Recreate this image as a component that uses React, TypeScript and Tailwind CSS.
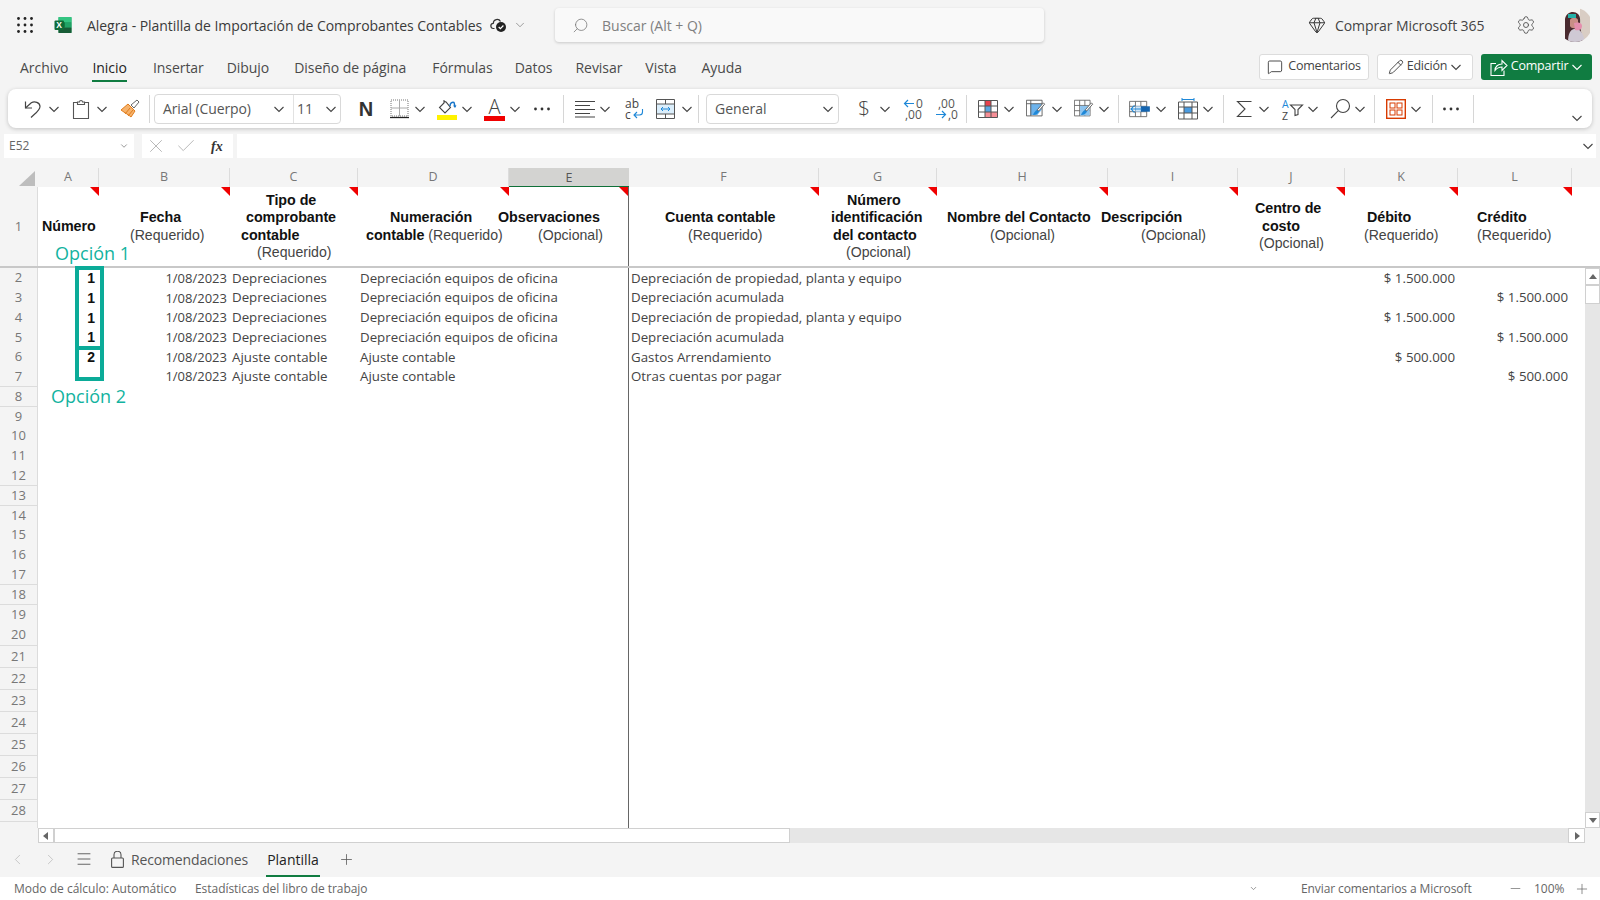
import React from 'react';
import { ChevronDown, ChevronLeft, ChevronRight, MessageSquare, Pencil, Search, Settings, Plus, Minus, Menu, X, Check, Gem } from 'lucide-react';

const gridCols = 'grid grid-cols-[38px_61px_131px_128px_151px_120px_190px_118px_171px_130px_107px_113px_114px_1fr]';

const letters = ['A', 'B', 'C', 'D', 'E', 'F', 'G', 'H', 'I', 'J', 'K', 'L'];

const menuTabs = [
  { label: 'Archivo', cls: 'ml-[20px]' },
  { label: 'Inicio', cls: 'ml-[24px]', active: true },
  { label: 'Insertar', cls: 'ml-[26px]' },
  { label: 'Dibujo', cls: 'ml-[23px]' },
  { label: 'Diseño de página', cls: 'ml-[25px]' },
  { label: 'Fórmulas', cls: 'ml-[26px]' },
  { label: 'Datos', cls: 'ml-[22px]' },
  { label: 'Revisar', cls: 'ml-[23px]' },
  { label: 'Vista', cls: 'ml-[23px]' },
  { label: 'Ayuda', cls: 'ml-[25px]' },
];

type Line = { b?: string; t?: string; cls: string };

const headerCells: Line[][] = [
  [{ b: 'Número', cls: 'pl-[4px]' }],
  [{ b: 'Fecha', cls: 'pl-[41px]' }, { t: '(Requerido)', cls: 'pl-[31px]' }],
  [{ b: 'Tipo de', cls: 'pl-[36px]' }, { b: 'comprobante', cls: 'pl-[16px]' }, { b: 'contable', cls: 'pl-[11px]' }, { t: '(Requerido)', cls: 'pl-[27px]' }],
  [{ b: 'Numeración', cls: 'pl-[32px]' }, { b: 'contable', t: ' (Requerido)', cls: 'pl-[8px]' }],
  [{ b: 'Observaciones', cls: '-ml-[11px]' }, { t: '(Opcional)', cls: 'pl-[29px]' }],
  [{ b: 'Cuenta contable', cls: 'pl-[36px]' }, { t: '(Requerido)', cls: 'pl-[59px]' }],
  [{ b: 'Número', cls: 'pl-[28px]' }, { b: 'identificación', cls: 'pl-[12px]' }, { b: 'del contacto', cls: 'pl-[14px]' }, { t: '(Opcional)', cls: 'pl-[27px]' }],
  [{ b: 'Nombre del Contacto', cls: 'pl-[10px]' }, { t: '(Opcional)', cls: 'pl-[53px]' }],
  [{ b: 'Descripción', cls: '-ml-[7px]' }, { t: '(Opcional)', cls: 'pl-[33px]' }],
  [{ b: 'Centro de', cls: 'pl-[17px]' }, { b: 'costo', cls: 'pl-[24px]' }, { t: '(Opcional)', cls: 'pl-[21px]' }],
  [{ b: 'Débito', cls: 'pl-[22px]' }, { t: '(Requerido)', cls: 'pl-[19px]' }],
  [{ b: 'Crédito', cls: 'pl-[19px]' }, { t: '(Requerido)', cls: 'pl-[19px]' }],
];

const dep = 'Depreciación equipos de oficina';
const prop = 'Depreciación de propiedad, planta y equipo';
const rows = [
  { n: '1', tipo: 'Depreciaciones', num: dep, cuenta: prop, deb: '$ 1.500.000', cre: '' },
  { n: '1', tipo: 'Depreciaciones', num: dep, cuenta: 'Depreciación acumulada', deb: '', cre: '$ 1.500.000' },
  { n: '1', tipo: 'Depreciaciones', num: dep, cuenta: prop, deb: '$ 1.500.000', cre: '' },
  { n: '1', tipo: 'Depreciaciones', num: dep, cuenta: 'Depreciación acumulada', deb: '', cre: '$ 1.500.000' },
  { n: '2', tipo: 'Ajuste contable', num: 'Ajuste contable', cuenta: 'Gastos Arrendamiento', deb: '$ 500.000', cre: '' },
  { n: '', tipo: 'Ajuste contable', num: 'Ajuste contable', cuenta: 'Otras cuentas por pagar', deb: '', cre: '$ 500.000' },
];

const Chev = ({ className = '' }: { className?: string }) => (
  <svg width="12" height="12" viewBox="0 0 12 12" fill="none" stroke="#444" strokeWidth="1.1" className={`shrink-0 ${className}`}>
    <path d="M1.5 4L6 8.5 10.5 4" />
  </svg>
);

const Sep = ({ className = '' }: { className?: string }) => (
  <div className={`w-px h-[28px] bg-[#d6d6d6] shrink-0 ${className}`} />
);

const Dots = ({ className = '' }: { className?: string }) => (
  <svg width="18" height="6" viewBox="0 0 18 6" className={`shrink-0 ${className}`} fill="#333">
    <circle cx="2.5" cy="3" r="1.4" /><circle cx="9" cy="3" r="1.4" /><circle cx="15.5" cy="3" r="1.4" />
  </svg>
);

const Waffle = () => (
  <svg width="16" height="16" viewBox="0 0 16 16" fill="#222" className="shrink-0">
    {[1.5, 8, 14.5].flatMap(y => [1.5, 8, 14.5].map(x => <circle key={`${x}-${y}`} cx={x} cy={y} r="1.4" />))}
  </svg>
);

const ExcelLogo = () => (
  <svg width="18" height="18" viewBox="0 0 18 18" className="shrink-0">
    <rect x="4.5" y="1" width="13" height="16" rx="1" fill="#21a366" />
    <rect x="4.5" y="1" width="13" height="5.3" fill="#33c481" />
    <rect x="4.5" y="6.3" width="6.5" height="5.3" fill="#107c41" />
    <rect x="11" y="6.3" width="6.5" height="5.3" fill="#21a366" />
    <rect x="4.5" y="11.6" width="13" height="5.4" fill="#185c37" />
    <rect x="0.5" y="4.5" width="9.5" height="9.5" rx="1" fill="#0e6b38" />
    <text x="5.2" y="12" fontSize="8.5" fontWeight="700" fill="#fff" textAnchor="middle" fontFamily="Liberation Sans">X</text>
  </svg>
);

const CloudCheck = () => (
  <svg width="18" height="16" viewBox="0 0 18 16" className="shrink-0">
    <path d="M4.5 11.5H3.6a2.6 2.6 0 0 1-.3-5.2A3.8 3.8 0 0 1 10.5 4.6" fill="none" stroke="#333" strokeWidth="1.2" />
    <circle cx="11" cy="10" r="5" fill="#222" />
    <path d="M8.7 10l1.7 1.7 3-3.2" fill="none" stroke="#fff" strokeWidth="1.2" />
  </svg>
);

const Avatar = () => (
  <svg width="34" height="34" viewBox="0 0 34 34" className="shrink-0">
    <defs><clipPath id="av"><circle cx="17" cy="17" r="17" /></clipPath></defs>
    <g clipPath="url(#av)">
      <rect width="34" height="34" fill="#f6f4f2" />
      <rect x="22" y="0" width="10" height="34" fill="#d9cdc4" />
      <path d="M7 34V11c1-7 9-9 13-5 3 3 2 8 2 12l3 16z" fill="#4a2a2e" />
      <path d="M12 12c1-3 7-3 8 0v6c-1 3-7 3-8 0z" fill="#c98f86" />
      <path d="M10 6h8v4h-8z" fill="#25b0a8" />
      <path d="M10 34c0-8 2-12 6-13 4-1 9 2 11 13z" fill="#cfc9d4" />
      <path d="M16 15c3-1 8-1 8 3s-4 5-7 4z" fill="#e58fae" />
    </g>
  </svg>
);

const Undo = () => (
  <svg width="20" height="20" viewBox="0 0 20 20" fill="none" stroke="#444" strokeWidth="1.2" className="shrink-0">
    <path d="M2.5 2.5V9H9" />
    <path d="M2.5 9l5.8-5.2c3.2-2 8.7-.4 8.7 3.7 0 4-5 7-9 11" />
  </svg>
);

const Paste = ({ className = '' }: { className?: string }) => (
  <svg width="18" height="20" viewBox="0 0 18 20" fill="none" stroke="#555" strokeWidth="1.1" className={`shrink-0 ${className}`}>
    <path d="M5.5 3.5h-4v16h15v-16h-4" />
    <path d="M5.5 5.5V3h2a1.5 1.5 0 0 1 3 0h2v2.5z" />
  </svg>
);

const Painter = ({ className = '' }: { className?: string }) => (
  <svg width="20" height="20" viewBox="0 0 20 20" className={`shrink-0 ${className}`}>
    <path d="M1 11l7-6 7 7-4 6c-2-2-6-4-10-7z" fill="#f6b26b" stroke="#e07b1a" strokeWidth="1" />
    <path d="M5 15l5-6M8 17l5-6" stroke="#e07b1a" strokeWidth="1" />
    <path d="M11 6l6-5 2 2-5 6z" fill="#fff" stroke="#666" strokeWidth="1" />
  </svg>
);

const Borders = ({ className = '' }: { className?: string }) => (
  <svg width="19" height="20" viewBox="0 0 19 20" fill="none" className={`shrink-0 ${className}`}>
    <path d="M1 1h17v16H1z" stroke="#777" strokeWidth="1" strokeDasharray="1 1" />
    <path d="M9.5 1v16M1 9h17" stroke="#aaa" strokeWidth="1" />
    <path d="M0 18.5h19" stroke="#222" strokeWidth="1.3" />
  </svg>
);

const Fill = ({ className = '' }: { className?: string }) => (
  <svg width="21" height="22" viewBox="0 0 21 22" fill="none" className={`shrink-0 ${className}`}>
    <path d="M7 2v3L2.5 9.5 8 15l5.5-5.5L9 4a1.5 1.5 0 0 0-2 0" stroke="#444" strokeWidth="1.1" />
    <path d="M13 8c0-3 2-4 4-3.5l1 4" stroke="#1976c9" strokeWidth="1.5" />
    <path d="M16 7.5l2 2.5 1.5-2.5z" fill="#1976c9" />
    <rect x="0" y="17" width="20" height="5" fill="#fff200" />
  </svg>
);

const FontColor = ({ className = '' }: { className?: string }) => (
  <div className={`w-[21px] h-[24px] shrink-0 flex flex-col items-center ${className}`}>
    <span className="font-['Open_Sans'] text-[20px] leading-[19px] text-[#444] font-light">A</span>
    <span className="mt-auto w-full h-[5px] bg-[#f00000]" />
  </div>
);

const Align = ({ className = '' }: { className?: string }) => (
  <svg width="20" height="18" viewBox="0 0 20 18" stroke="#444" strokeWidth="1.1" className={`shrink-0 ${className}`}>
    <path d="M0 1.5h20M0 5.5h15M0 9.5h20M0 13.5h15M0 17h20" />
  </svg>
);

const Wrap = ({ className = '' }: { className?: string }) => (
  <svg width="20" height="22" viewBox="0 0 20 22" fill="none" className={`shrink-0 overflow-visible ${className}`}>
    <text x="0" y="10" fontSize="12" fill="#444" fontFamily="Open Sans">ab</text>
    <text x="0" y="21" fontSize="12" fill="#444" fontFamily="Open Sans">c</text>
    <path d="M17.5 11v3a3 3 0 0 1-3 3h-5M12 14l-3 3 3 3" stroke="#1e88d8" strokeWidth="1.1" />
  </svg>
);

const Merge = ({ className = '' }: { className?: string }) => (
  <svg width="19" height="20" viewBox="0 0 19 20" fill="none" className={`shrink-0 ${className}`}>
    <rect x="1" y="5" width="17" height="10" fill="#dbeefb" />
    <path d="M.5.5h18v19H.5zM.5 5h18M.5 15h18M9.5.5V5M9.5 15v4.5" stroke="#555" strokeWidth="1" />
    <path d="M5 10h9M7 8l-2 2 2 2M12 8l2 2-2 2" stroke="#1e88d8" strokeWidth="1" />
  </svg>
);

const Dec = ({ left, className = '' }: { left?: boolean; className?: string }) => (
  <svg width="22" height="22" viewBox="0 0 22 22" fill="none" className={`shrink-0 overflow-visible ${className}`}>
    {left ? (
      <>
        <path d="M12 5.5H2.5M6 2L2.5 5.5 6 9" stroke="#1e88d8" strokeWidth="1.2" />
        <text x="14" y="10" fontSize="12" fill="#555" fontFamily="Open Sans">0</text>
        <text x="3" y="21" fontSize="12" fill="#555" fontFamily="Open Sans">,00</text>
      </>
    ) : (
      <>
        <text x="3" y="10" fontSize="12" fill="#555" fontFamily="Open Sans">,00</text>
        <path d="M1 16.5h9.5M7 13l3.5 3.5L7 20" stroke="#1e88d8" strokeWidth="1.2" />
        <text x="13" y="21" fontSize="12" fill="#555" fontFamily="Open Sans">,0</text>
      </>
    )}
  </svg>
);

const CondFormat = ({ className = '' }: { className?: string }) => (
  <svg width="20" height="20" viewBox="0 0 20 20" fill="none" className={`shrink-0 ${className}`}>
    <rect x="7" y="1.5" width="6" height="5.5" fill="#e8414d" />
    <rect x="7" y="7" width="6" height="6" fill="#5aa5e0" />
    <rect x="7" y="13" width="12" height="5.5" fill="#f58e96" />
    <path d="M.5 1.5h19v17H.5zM.5 7h19M.5 13h19M7 1.5v17M13 1.5v17" stroke="#555" strokeWidth="1" />
  </svg>
);

const Brush = () => (
  <>
    <path d="M8 18c1-3 3-5 5-6l2 2c-1 2-3 4-7 4z" fill="#1e88d8" />
    <path d="M13 12l7-8 1.5 1.5-7 8z" fill="#fff" stroke="#555" strokeWidth="1" />
  </>
);

const TableFmt = ({ className = '' }: { className?: string }) => (
  <svg width="20" height="19" viewBox="0 0 23 21" fill="none" className={`shrink-0 ${className}`}>
    <path d="M5 5h13v7l-5 6H5z" fill="#6db3ec" />
    <path d="M.5 1h18v18H.5zM.5 5h18M5.5 1v18" stroke="#555" strokeWidth="1" />
    <Brush />
  </svg>
);

const CellStyles = ({ className = '' }: { className?: string }) => (
  <svg width="20" height="19" viewBox="0 0 23 21" fill="none" className={`shrink-0 ${className}`}>
    <path d="M.5 1h18v18H.5zM.5 7h18M.5 13h18M6.5 1v18M12.5 1v18" stroke="#666" strokeWidth="1" />
    <rect x="7" y="7.5" width="11" height="11" fill="#8cc4f0" />
    <Brush />
  </svg>
);

const InsertCells = ({ className = '' }: { className?: string }) => (
  <svg width="21" height="18" viewBox="0 0 23 20" fill="none" className={`shrink-0 ${className}`}>
    <path d="M.5 1.5h19v17H.5zM.5 7h19M.5 13h19M7 1.5v17M13 1.5v17" stroke="#666" strokeWidth="1" />
    <rect x="7" y="7" width="16" height="6" fill="#1565b0" />
    <rect x="7" y="7" width="6" height="6" fill="#cfe5f7" />
    <path d="M14 10H2M6 6l-4 4 4 4" stroke="#1e88d8" strokeWidth="1.2" />
  </svg>
);

const FormatCells = ({ className = '' }: { className?: string }) => (
  <svg width="20" height="22" viewBox="0 0 20 22" fill="none" className={`shrink-0 ${className}`}>
    <rect x="6" y="9" width="8" height="6" fill="#4a9be0" />
    <path d="M.5 4h19v17H.5zM.5 9h19M.5 15h19M6 4v17M14 4v17" stroke="#555" strokeWidth="1" />
    <path d="M4 1.5h12M4 0v3M16 0v3" stroke="#1e88d8" strokeWidth="1" />
  </svg>
);

const SigmaIcon = ({ className = '' }: { className?: string }) => (
  <svg width="16" height="18" viewBox="0 0 16 18" fill="none" stroke="#444" strokeWidth="1.1" className={`shrink-0 ${className}`}>
    <path d="M15.5 1.5H1.5L9 9l-7.5 7.5h14" />
  </svg>
);

const SortFilter = ({ className = '' }: { className?: string }) => (
  <svg width="21" height="24" viewBox="0 0 21 24" fill="none" className={`shrink-0 overflow-visible ${className}`}>
    <text x="0" y="11" fontSize="10.5" fill="#1e88d8" fontFamily="Open Sans">A</text>
    <text x="0" y="23" fontSize="10.5" fill="#444" fontFamily="Open Sans">Z</text>
    <path d="M8.5 8h12l-4.5 4.5v5l-3 1v-6z" stroke="#444" strokeWidth="1.1" />
  </svg>
);

const Find = ({ className = '' }: { className?: string }) => (
  <svg width="21" height="21" viewBox="0 0 21 21" fill="none" stroke="#444" strokeWidth="1.1" className={`shrink-0 ${className}`}>
    <circle cx="13" cy="8" r="6.5" />
    <path d="M8.3 12.7L1 20" />
  </svg>
);

const AddIns = ({ className = '' }: { className?: string }) => (
  <svg width="20" height="20" viewBox="0 0 20 20" fill="none" stroke="#d83b01" className={`shrink-0 ${className}`}>
    <rect x=".7" y=".7" width="18.6" height="18.6" strokeWidth="1.4" />
    <rect x="4" y="4" width="5" height="5" strokeWidth="1" />
    <rect x="11" y="4" width="5" height="5" strokeWidth="1" />
    <rect x="4" y="11" width="5" height="5" strokeWidth="1" />
    <rect x="11" y="11" width="5" height="5" strokeWidth="1" />
  </svg>
);

const ShareIcon = () => (
  <svg width="18" height="18" viewBox="0 0 18 18" fill="none" stroke="#fff" strokeWidth="1.1" className="shrink-0">
    <path d="M6 5.5H1v12h13v-5" />
    <path d="M5 12.5c0-4 3-6.5 7-6.5V2.5l5 5-5 5V9c-3 0-5 1-7 3.5z" />
  </svg>
);

const LockIcon = ({ className = '' }: { className?: string }) => (
  <svg width="13" height="17" viewBox="0 0 13 17" fill="none" stroke="#555" strokeWidth="1.1" className={`shrink-0 ${className}`}>
    <rect x=".6" y="7" width="11.8" height="9.4" rx="1" />
    <path d="M3 7V3.8a3.5 3.5 0 0 1 7 0V7" />
  </svg>
);

const Triangle = () => (
  <svg width="9" height="9" viewBox="0 0 9 9" className="absolute top-0 right-0" fill="#f00000">
    <path d="M0 0h9v9z" />
  </svg>
);

const ScrollBtn = ({ dir, className = '' }: { dir: 'up' | 'down' | 'left' | 'right'; className?: string }) => {
  const d = { up: 'M0 6l4-5 4 5z', down: 'M0 2l4 5 4-5z', left: 'M6 0L1 4l5 4z', right: 'M2 0l5 4-5 4z' }[dir];
  return (
    <div className={`bg-white border border-[#d0d0d0] flex items-center justify-center shrink-0 ${className}`}>
      <svg width="8" height="8" viewBox="0 0 8 8" fill="#666"><path d={d} /></svg>
    </div>
  );
};

export default function App() {
  const rowNums = Array.from({ length: 28 }, (_, i) => i + 2);

  return (
    <div className="w-[1600px] h-[900px] overflow-hidden bg-[#f4f4f4] flex flex-col font-['Open_Sans',sans-serif] text-[#333]">
      {/* title bar */}
      <div className="h-[50px] shrink-0 flex items-center">
        <div className="ml-[17px]"><Waffle /></div>
        <div className="ml-[21px]"><ExcelLogo /></div>
        <span className="ml-[15px] text-[14px] tracking-[-0.05px] text-[#3a3a3a] whitespace-nowrap w-[398px]">Alegra - Plantilla de Importación de Comprobantes Contables</span>
        <div className="ml-[5px]"><CloudCheck /></div>
        <ChevronDown size={14} strokeWidth={1.2} className="ml-[5px] text-[#777]" />
        <div className="ml-[28px] w-[489px] h-[34px] rounded-[4px] bg-[#f9f9f9] shadow-[0_1px_3px_rgba(0,0,0,0.18)] flex items-center">
          <Search size={17} strokeWidth={1.1} className="ml-[17px] text-[#777] -scale-x-100" />
          <span className="ml-[13px] text-[14px] text-[#808080]">Buscar (Alt + Q)</span>
        </div>
        <Gem size={18} strokeWidth={1.3} className="ml-[264px] text-[#333]" />
        <span className="ml-[9px] text-[14px] tracking-[-0.08px] text-[#444] whitespace-nowrap w-[149px]">Comprar Microsoft 365</span>
        <Settings size={20} strokeWidth={1.1} className="ml-[32px] text-[#555]" />
        <div className="ml-[22px]"><Avatar /></div>
      </div>

      {/* menu tabs */}
      <div className="h-[36px] shrink-0 flex items-center">
        {menuTabs.map(tab => (
          <div key={tab.label} className={`h-full flex items-center relative pb-[2px] text-[14px] tracking-[-0.05px] whitespace-nowrap ${tab.cls} ${tab.active ? 'text-[#222] font-medium' : 'text-[#4a4a4a]'}`}>
            {tab.label}
            {tab.active && <span className="absolute left-0 right-0 bottom-[4px] h-[2px] bg-[#107c41]" />}
          </div>
        ))}
        <div className="ml-auto mr-[8px] mb-[3px] flex items-center gap-[8px]">
          <div className="h-[26px] w-[110px] rounded-[3px] bg-white border border-[#dcdcdc] flex items-center justify-center gap-[5px] text-[12.5px] tracking-[-0.2px] text-[#444]">
            <MessageSquare size={16} strokeWidth={1.2} className="text-[#222]" />
            Comentarios
          </div>
          <div className="h-[26px] w-[96px] rounded-[3px] bg-white border border-[#dcdcdc] flex items-center justify-center gap-[3px] text-[12.5px] tracking-[-0.2px] text-[#444]">
            <Pencil size={16} strokeWidth={1.2} className="text-[#222]" />
            Edición
            <Chev />
          </div>
          <div className="h-[26px] w-[111px] rounded-[3px] bg-[#107c41] flex items-center justify-center gap-[3px] text-[12.5px] tracking-[-0.2px] font-medium text-white">
            <ShareIcon />
            Compartir
            <svg width="12" height="12" viewBox="0 0 12 12" fill="none" stroke="#fff" strokeWidth="1.1" className="shrink-0"><path d="M1.5 4L6 8.5 10.5 4" /></svg>
          </div>
        </div>
      </div>

      {/* ribbon */}
      <div className="mx-[8px] mt-[3px] h-[39px] shrink-0 rounded-[8px] bg-white shadow-[0_1px_4px_rgba(0,0,0,0.2)] flex items-center">
        <div className="ml-[15px]"><Undo /></div>
        <Chev className="ml-[5px]" />
        <Paste className="ml-[12px]" />
        <Chev className="ml-[6px]" />
        <Painter className="ml-[12px]" />
        <Sep className="ml-[9px]" />
        <div className="ml-[4px] w-[187px] h-[30px] shrink-0 rounded-[4px] border border-[#d9d9d9] flex items-center text-[14px] text-[#555] tracking-[-0.1px]">
          <span className="ml-[8px] w-[110px] shrink-0 whitespace-nowrap">Arial (Cuerpo)</span>
          <Chev />
          <div className="ml-[8px] w-px h-full bg-[#e2e2e2] shrink-0" />
          <span className="ml-[3px] w-[22px] shrink-0">11</span>
          <Chev className="ml-[6px]" />
        </div>
        <span className="ml-[16px] w-[18px] shrink-0 text-center text-[20px] font-bold font-['Liberation_Sans'] text-[#333]">N</span>
        <Borders className="ml-[15px]" />
        <Chev className="ml-[5px]" />
        <Fill className="ml-[11px]" />
        <Chev className="ml-[3px]" />
        <FontColor className="ml-[11px]" />
        <Chev className="ml-[4px]" />
        <Dots className="ml-[12px]" />
        <Sep className="ml-[12px]" />
        <Align className="ml-[11px]" />
        <Chev className="ml-[4px]" />
        <Wrap className="ml-[14px]" />
        <Merge className="ml-[11px]" />
        <Chev className="ml-[6px]" />
        <Sep className="ml-[5px]" />
        <div className="ml-[7px] w-[133px] h-[30px] shrink-0 rounded-[4px] border border-[#d9d9d9] flex items-center justify-between pl-[8px] pr-[4px] text-[14px] text-[#555]">
          General
          <Chev />
        </div>
        <span className="ml-[18px] w-[14px] shrink-0 text-center text-[21px] font-light text-[#444] leading-none">$</span>
        <Chev className="ml-[8px]" />
        <Dec left className="ml-[11px]" />
        <Dec className="ml-[11px]" />
        <Sep className="ml-[9px]" />
        <CondFormat className="ml-[11px]" />
        <Chev className="ml-[5px]" />
        <TableFmt className="ml-[11px]" />
        <Chev className="ml-[5px]" />
        <CellStyles className="ml-[11px]" />
        <Chev className="ml-[4px]" />
        <Sep className="ml-[8px]" />
        <InsertCells className="ml-[10px]" />
        <Chev className="ml-[5px]" />
        <FormatCells className="ml-[11px]" />
        <Chev className="ml-[4px]" />
        <Sep className="ml-[9px]" />
        <SigmaIcon className="ml-[12px]" />
        <Chev className="ml-[6px]" />
        <SortFilter className="ml-[12px]" />
        <Chev className="ml-[4px]" />
        <Find className="ml-[11px]" />
        <Chev className="ml-[3px]" />
        <Sep className="ml-[8px]" />
        <AddIns className="ml-[11px]" />
        <Chev className="ml-[4px]" />
        <Sep className="ml-[10px]" />
        <Dots className="ml-[9px]" />
        <Sep className="ml-[13px]" />
        <Chev className="ml-auto mr-[9px] mt-[18px]" />
      </div>

      {/* formula bar */}
      <div className="h-[24px] mt-[6px] shrink-0 flex">
        <div className="ml-[4px] w-[130px] bg-white flex items-center justify-between pl-[5px] pr-[5px] text-[12px] text-[#666]">
          E52
          <ChevronDown size={10} strokeWidth={1.6} />
        </div>
        <div className="ml-[8px] w-[91px] bg-white flex items-center">
          <X size={22} strokeWidth={0.9} className="ml-[3px] text-[#aaa] shrink-0" />
          <Check size={22} strokeWidth={0.9} className="ml-[8px] text-[#aaa] shrink-0" />
          <span className="ml-[14px] text-[14px] italic font-semibold font-['Liberation_Serif'] text-[#333]">fx</span>
        </div>
        <div className="ml-[4px] w-[1359px] bg-white flex items-center justify-end pr-[2px]">
          <Chev />
        </div>
      </div>

      {/* sheet */}
      <div className="mt-[10px] flex-1 min-h-0 flex flex-col relative font-['Liberation_Sans']">
        <div className={`${gridCols} h-[19px] shrink-0 font-['Open_Sans'] text-[12.5px] text-[#777]`}>
          <div className="relative">
            <svg width="16" height="15" viewBox="0 0 16 15" className="absolute right-[3px] bottom-[2px]" fill="#bdbdbd"><path d="M16 0v15H0z" /></svg>
          </div>
          {letters.map(l => (
            <div key={l} className={`relative flex items-center justify-center ${l === 'E' ? 'bg-[#d3d3d1] text-[#555]' : 'border-r border-b border-[#dcdcdc]'}`}>
              {l}
              {l === 'E' && <span className="absolute left-0 right-0 bottom-0 h-[2px] bg-[#0f7038]" />}
            </div>
          ))}
          <div className="border-b border-[#dcdcdc]" />
        </div>

        {/* row 1 */}
        <div className={`${gridCols} h-[81px] shrink-0 border-b-2 border-[#c8c8c8]`}>
          <div className="bg-[#f4f4f4] flex items-center justify-center font-['Open_Sans'] text-[13px] text-[#777] border-r border-[#dcdcdc]">1</div>
          {headerCells.map((lines, i) => (
            <div key={i} className={`relative bg-white flex flex-col justify-center text-[14.1px] whitespace-nowrap ${i === 4 ? 'border-r border-[#666]' : ''}`}>
              <Triangle />
              {lines.map((ln, j) => (
                <div key={j} className={`h-[17.5px] leading-[17.5px] text-[#444] ${ln.cls}`}>
                  {ln.b && <span className="font-bold text-[#111] text-[14.3px] tracking-[-0.05px]">{ln.b}</span>}
                  {ln.t}
                </div>
              ))}
            </div>
          ))}
          <div className="bg-white" />
        </div>

        {/* data rows and vertical scrollbar */}
        <div className="flex-1 min-h-0 flex">
          <div className="flex-1 min-w-0 overflow-hidden bg-white">
            {rowNums.map(num => {
              const r = rows[num - 2];
              return (
                <div key={num} className={`${gridCols} ${num < 20 ? 'h-[19.8px]' : 'h-[22px]'} font-['Open_Sans'] text-[13.3px] text-[#444] whitespace-nowrap`}>
                  <div className="bg-[#f4f4f4] border-b border-r border-[#dcdcdc] flex items-center justify-center text-[#777] text-[13px]">{num}</div>
                  <div className="flex items-center justify-end pr-[4px] font-['Liberation_Sans'] font-bold text-[14px] text-[#111]">{r?.n}</div>
                  <div className="flex items-center justify-end pr-[3px] text-[13px]">{r && '1/08/2023'}</div>
                  <div className="flex items-center pl-[2px]">{r?.tipo}</div>
                  <div className="flex items-center pl-[2px]">{r?.num}</div>
                  <div className="border-r border-[#666]" />
                  <div className="flex items-center pl-[2px]">{r?.cuenta}</div>
                  <div /><div /><div /><div />
                  <div className="flex items-center justify-end pr-[3px]">{r?.deb}</div>
                  <div className="flex items-center justify-end pr-[4px]">{r?.cre}</div>
                  <div />
                </div>
              );
            })}
          </div>
          <div className="w-[15px] shrink-0 bg-[#e6e6e6] flex flex-col">
            <ScrollBtn dir="up" className="h-[17px]" />
            <div className="h-[19px] bg-white border border-[#d0d0d0]" />
            <ScrollBtn dir="down" className="h-[16px] mt-auto" />
          </div>
        </div>

        {/* horizontal scrollbar */}
        <div className="h-[15px] shrink-0 flex bg-[#f4f4f4]">
          <div className="ml-[38px] flex-1 flex bg-[#e6e6e6] mr-[15px]">
            <ScrollBtn dir="left" className="w-[16px]" />
            <div className="w-[736px] bg-white border border-[#d0d0d0]" />
            <ScrollBtn dir="right" className="w-[17px] ml-auto" />
          </div>
        </div>

        {/* annotations over the sheet */}
        <span className="absolute left-[55px] top-[71px] font-['Open_Sans'] text-[18px] leading-[28px] text-[#12b3a0]">Opción 1</span>
        <span className="absolute left-[51px] top-[214px] font-['Open_Sans'] text-[18px] leading-[28px] text-[#12b3a0]">Opción 2</span>
        <div className="absolute left-[75px] top-[98px] w-[29px] h-[84px] border-[4px] border-[#0bab98]" />
        <div className="absolute left-[75px] top-[178px] w-[29px] h-[35px] border-[4px] border-[#0bab98]" />
      </div>

      {/* sheet tabs */}
      <div className="h-[34px] shrink-0 flex items-center pb-[2px] text-[#555]">
        <ChevronLeft size={17} strokeWidth={1.1} className="ml-[9px] text-[#bbb]" />
        <ChevronRight size={17} strokeWidth={1.1} className="ml-[16px] text-[#bbb]" />
        <Menu size={18} strokeWidth={1.2} className="ml-[16px] text-[#555]" />
        <LockIcon className="ml-[18px]" />
        <span className="ml-[7px] text-[14px] tracking-[-0.15px] w-[122px] whitespace-nowrap">Recomendaciones</span>
        <div className="ml-[13px] self-stretch w-[54px] flex items-center justify-center relative text-[14px] font-medium text-[#222]">
          Plantilla
          <span className="absolute left-0 right-0 bottom-[-2px] h-[2px] bg-[#107c41]" />
        </div>
        <Plus size={17} strokeWidth={1.1} className="ml-[18px] text-[#555]" />
      </div>

      {/* status bar */}
      <div className="h-[23px] shrink-0 bg-white flex items-center text-[12px] text-[#666] whitespace-nowrap">
        <span className="ml-[14px] w-[163px]">Modo de cálculo: Automático</span>
        <span className="ml-[18px] w-[172px] tracking-[-0.05px]">Estadísticas del libro de trabajo</span>
        <ChevronDown size={9} strokeWidth={2} className="ml-[882px] text-[#777]" />
        <span className="ml-[43px] w-[170px] tracking-[-0.1px]">Enviar comentarios a Microsoft</span>
        <Minus size={15} strokeWidth={1.1} className="ml-[37px]" />
        <span className="ml-[11px]">100%</span>
        <Plus size={16} strokeWidth={1.1} className="ml-[9px]" />
      </div>
    </div>
  );
}
